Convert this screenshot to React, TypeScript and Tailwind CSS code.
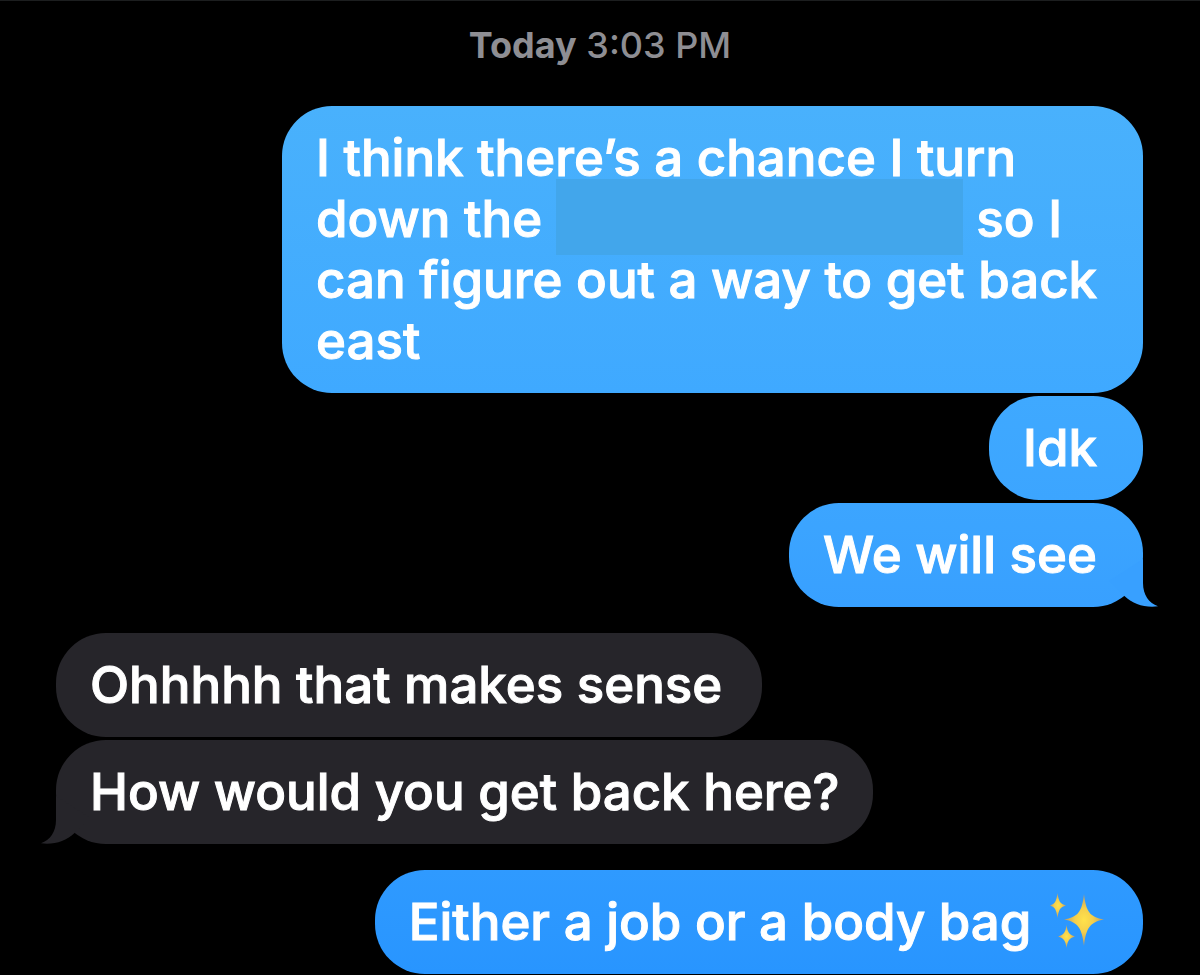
import type { ReactNode } from "react";

type Side = "sent" | "received";

interface Message {
  id: number;
  side: Side;
  tone: string;
  padding: string;
  tail?: boolean;
  startsGroup?: boolean;
  body: ReactNode;
}

function Redacted() {
  return (
    <span
      role="img"
      aria-label="redacted"
      className="-mt-[22px] -mb-[10px] inline-block h-[76px] w-[407px] max-w-full bg-[#42a6eb] align-middle"
    />
  );
}

function Sparkles() {
  return (
    <svg
      viewBox="0 0 60 60"
      role="img"
      aria-label="sparkles"
      className="-mt-[14px] -mb-[2px] ml-0.5 inline-block size-[60px] align-middle"
    >
      <defs>
        <radialGradient id="glow">
          <stop offset="0" stopColor="#ffe24a" />
          <stop offset="0.45" stopColor="#f5cf4c" />
          <stop offset="1" stopColor="#b99a6a" />
        </radialGradient>
      </defs>
      <g fill="url(#glow)">
        <path d="M37 4C39 22 43 27 57 29.500C43 32 39 38 37 56C35 38 31 32 17 29.500C31 27 35 22 37 4Z" />
        <path d="M10.500 3C11.500 11 13 14 19 15.500C13 17 11.500 20 10.500 28C9.500 20 8 17 3 15.500C8 14 9.500 11 10.500 3Z" />
        <path d="M19.500 35C20.500 42 22 45 28 46.500C22 48 20.500 51 19.500 58C18.500 51 17 48 11 46.500C17 45 18.500 42 19.500 35Z" />
      </g>
    </svg>
  );
}

function Tail({ side }: { side: Side }) {
  return (
    <svg
      viewBox="0 0 50 48"
      aria-hidden="true"
      className={
        side === "sent"
          ? "absolute -right-4 bottom-0 h-12 w-[50px] fill-[#38a0ff]"
          : "absolute -left-4 bottom-0 h-12 w-[50px] -scale-x-100 fill-[#26252a]"
      }
    >
      <path d="M34 0V24C34 36 40 44 49 47.300C36 49 24 45 16 37.500L0 22Z" />
    </svg>
  );
}

const messages: Message[] = [
  {
    id: 1,
    side: "sent",
    tone: "bg-linear-to-b from-[#49b1fc] to-[#3fa9ff]",
    padding: "px-[34px]",
    body: (
      <>
        I think there’s a chance I turn down the <Redacted /> so I can figure
        out a way to get back east
      </>
    ),
  },
  {
    id: 2,
    side: "sent",
    tone: "bg-linear-to-b from-[#3fa9ff] to-[#3ca5ff]",
    padding: "pr-[46px] pl-[34px]",
    body: "Idk",
  },
  {
    id: 3,
    side: "sent",
    tone: "bg-linear-to-b from-[#3ca5ff] to-[#38a0ff]",
    padding: "pr-[46px] pl-[34px]",
    tail: true,
    body: "We will see",
  },
  {
    id: 4,
    side: "received",
    tone: "bg-[#26252a]",
    padding: "pr-10 pl-[34px]",
    startsGroup: true,
    body: "Ohhhhh that makes sense",
  },
  {
    id: 5,
    side: "received",
    tone: "bg-[#26252a]",
    padding: "px-[34px]",
    tail: true,
    body: "How would you get back here?",
  },
  {
    id: 6,
    side: "sent",
    tone: "bg-linear-to-b from-[#2f9aff] to-[#2895ff]",
    padding: "pr-9 pl-[34px]",
    startsGroup: true,
    body: (
      <>
        Either a job or a body bag <Sparkles />
      </>
    ),
  },
];

function Bubble({ message }: { message: Message }) {
  const { side, tone, padding, tail, startsGroup, body } = message;
  return (
    <li
      className={`flex ${side === "sent" ? "justify-end" : "justify-start"} ${
        startsGroup ? "mt-[26px]" : "mt-[3px]"
      } first:mt-0`}
    >
      <div
        className={`relative max-w-[861px] rounded-[50px] pt-[21px] pb-[22px] text-[51px] leading-[61px] font-medium text-white [-webkit-text-stroke:1px_white] ${tone} ${padding}`}
      >
        {tail && <Tail side={side} />}
        <p className="relative">{body}</p>
      </div>
    </li>
  );
}

export default function App() {
  return (
    <main className="min-h-screen border-t border-[#1c1e1f] bg-black font-['Inter','Liberation_Sans',sans-serif]">
      <h1 className="pt-[22px] text-center text-[36px] leading-[44px] font-medium text-[#8e8e93]">
        <span className="font-bold">Today</span> 3:03 PM
      </h1>
      <ol className="mt-[39px] pr-[57px] pl-14">
        {messages.map((message) => (
          <Bubble key={message.id} message={message} />
        ))}
      </ol>
    </main>
  );
}
